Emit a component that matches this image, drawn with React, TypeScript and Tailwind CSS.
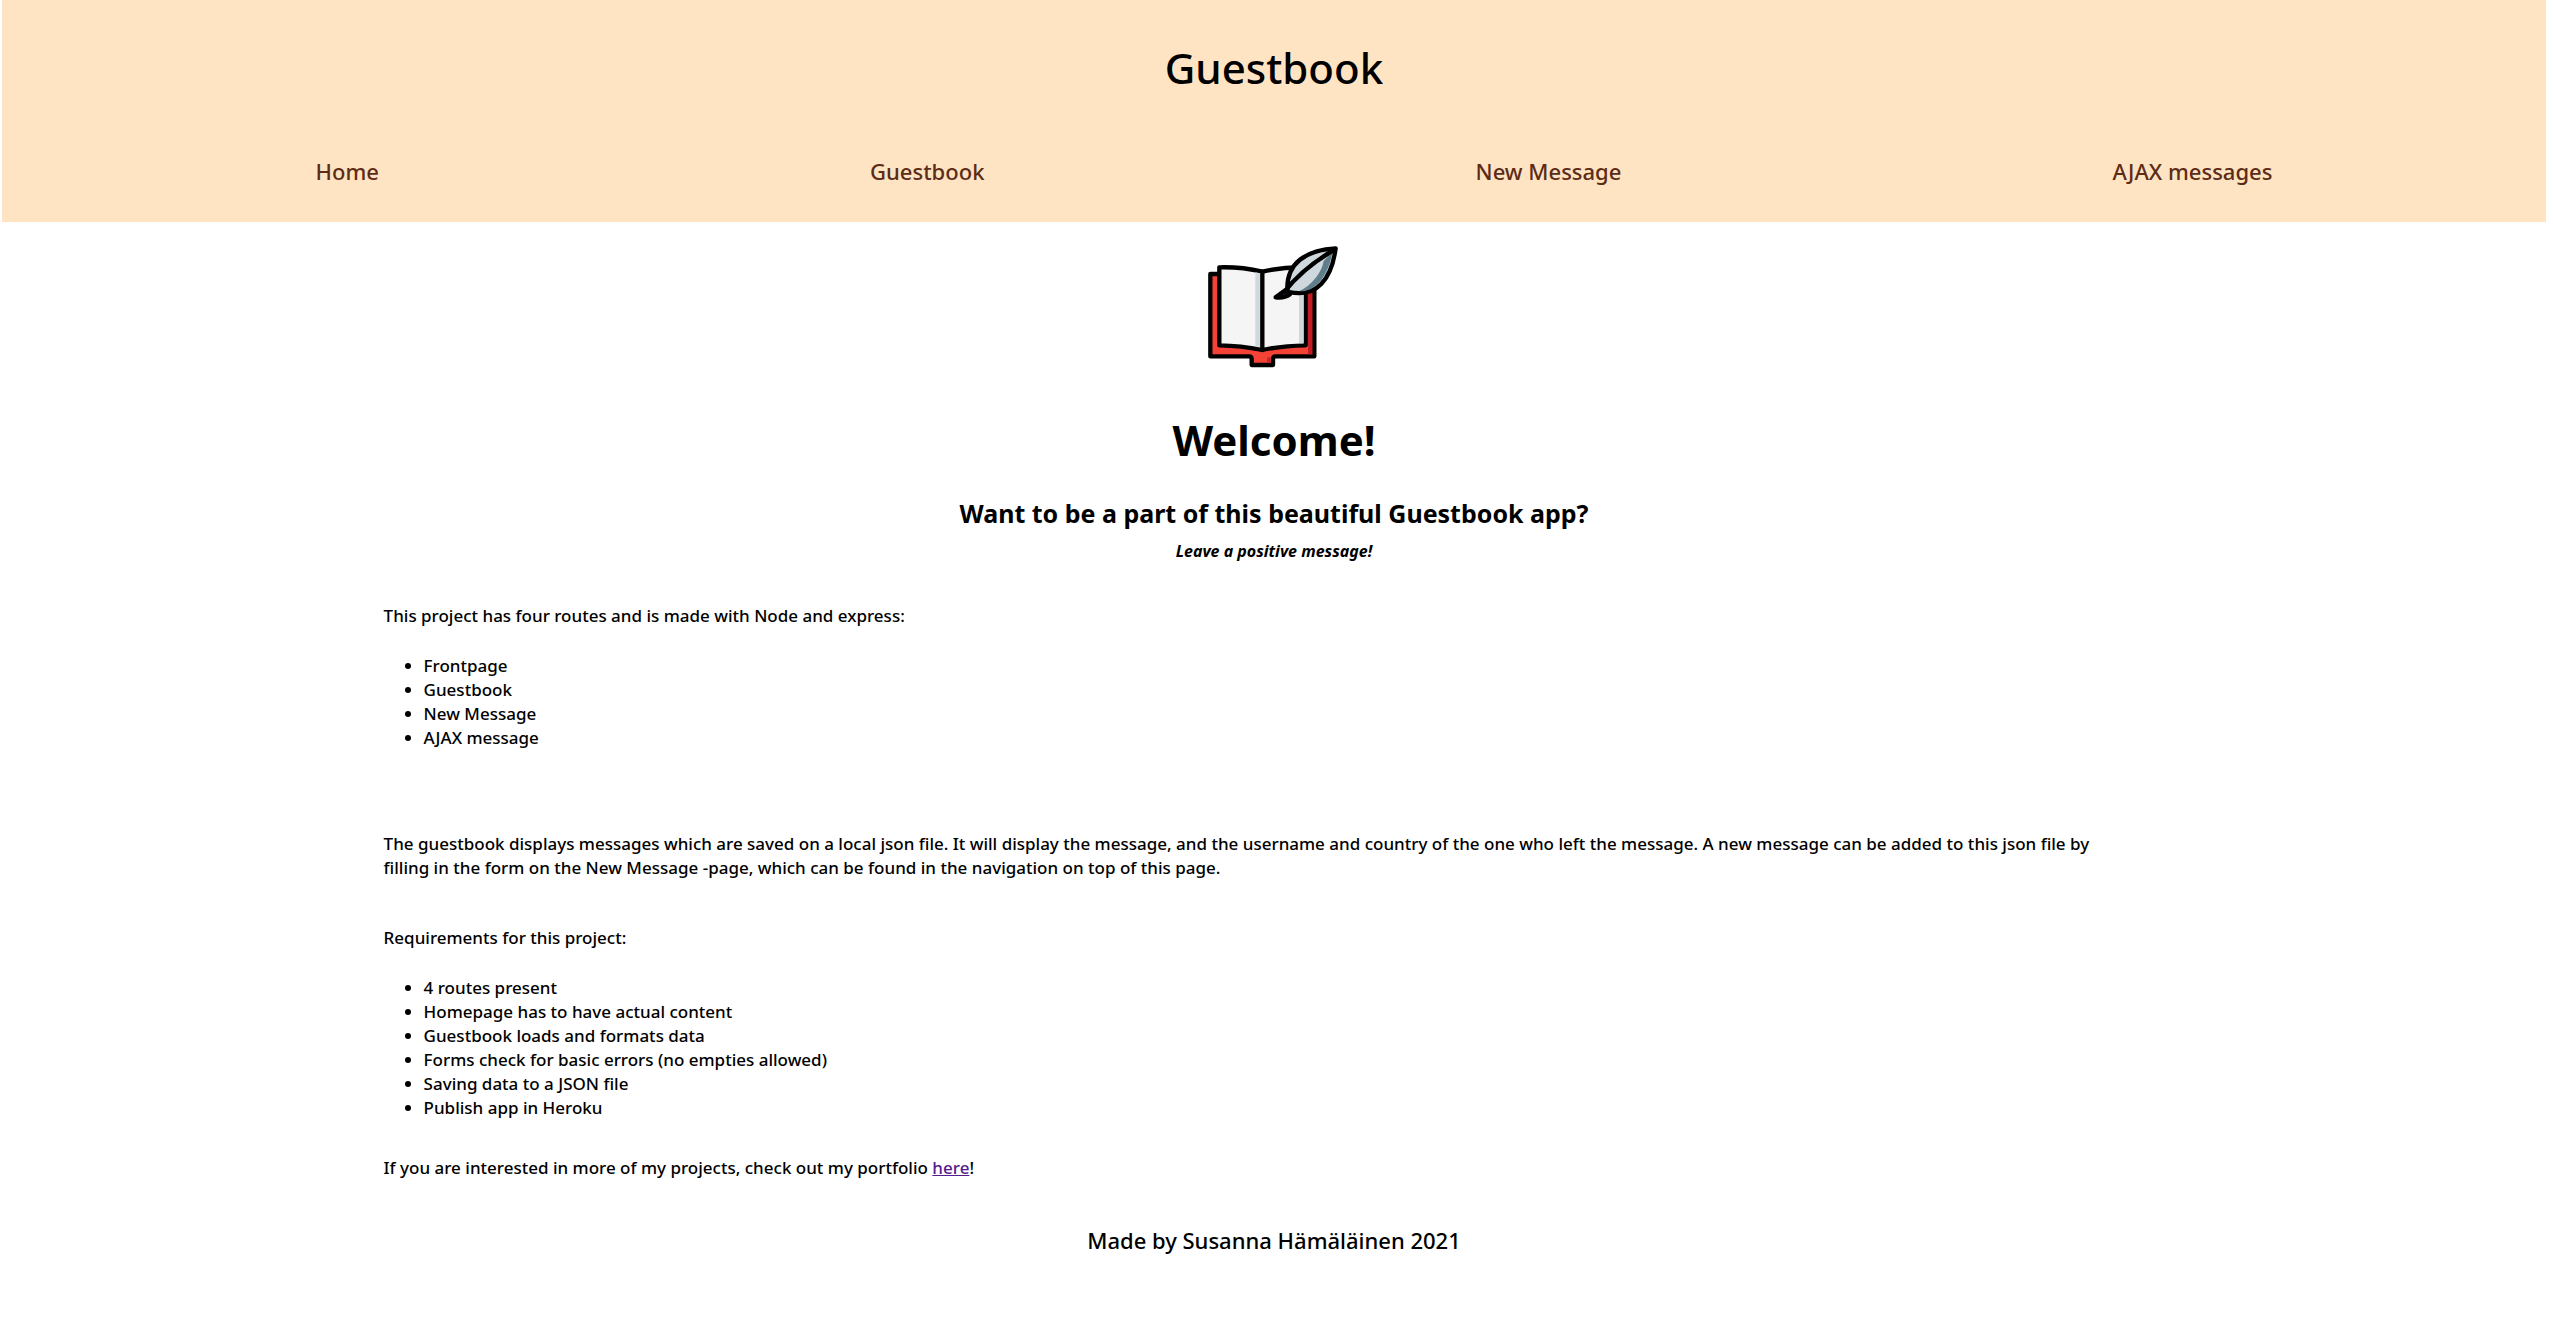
const navLinks = ["Home", "Guestbook", "New Message", "AJAX messages"];
const routes = ["Frontpage", "Guestbook", "New Message", "AJAX message"];
const requirements = [
  "4 routes present",
  "Homepage has to have actual content",
  "Guestbook loads and formats data",
  "Forms check for basic errors (no empties allowed)",
  "Saving data to a JSON file",
  "Publish app in Heroku",
];

function BookIcon() {
  return (
    <svg viewBox="0 0 510 450" className="h-[150px] w-[170px]" role="img" aria-label="Guestbook with quill">
      <g stroke="#000" strokeWidth="13" strokeLinejoin="round" strokeLinecap="round">
        <path d="M91 132H64V379H180Q188 379 188 387V405H252V387Q252 379 260 379H376V132H350Z" fill="#f44336" />
        <path d="M357 180H370V373H357Z" fill="#c21b24" stroke="none" />
        <path d="M234 382H246V399H234Z" fill="#c62828" stroke="none" />
        <path d="M91 112Q155 110 220 125Q285 110 350 112V346Q280 347 220 360Q155 347 91 346Z" fill="#f5f5f5" />
        <path d="M199 127L214 130V351L199 348ZM330 150H344V340H330Z" fill="#cfd8dc" stroke="none" />
        <path d="M220 125V360" fill="none" />
        <path d="M295 180C292 100 350 60 440 55C428 145 385 205 300 186Z" fill="#cfd8dc" />
        <path d="M431 66C416 136 385 185 330 184C370 165 400 125 404 93Z" fill="#607d8b" stroke="none" />
        <path d="M260 202L290 180L303 193Q285 206 260 202Z" fill="#26374f" />
        <path d="M286 186Q340 115 435 60" fill="none" />
      </g>
    </svg>
  );
}

function BulletList({ items }: { items: string[] }) {
  return (
    <ul className="mt-[26px] list-disc pl-10">
      {items.map((item) => (
        <li key={item}>{item}</li>
      ))}
    </ul>
  );
}

export default function App() {
  return (
    <div className="bg-white pr-[7px] pl-0.5 font-['Noto_Sans',sans-serif] text-[17px] leading-6 font-medium text-black">
      <header className="bg-[#ffe4c4] pt-[38px] pb-[34px]">
        <p className="text-center text-[42px] leading-[60px]">Guestbook</p>
        <nav className="mt-14">
          <ul className="flex justify-around pr-7 pl-[68px] text-[22px] leading-[34px] text-[#5c2c16]">
            {navLinks.map((label) => (
              <li key={label}>
                <a href="#">{label}</a>
              </li>
            ))}
          </ul>
        </nav>
      </header>
      <main>
        <div className="flex flex-col items-center pt-2 text-center font-bold">
          <BookIcon />
          <h1 className="mt-7 text-[42px] leading-[64px]">Welcome!</h1>
          <h2 className="mt-[21px] text-[25px] leading-10">Want to be a part of this beautiful Guestbook app?</h2>
          <p className="mt-1.5 text-base italic">Leave a positive message!</p>
        </div>
        <div className="mt-[41px] mr-[16.5%] ml-[15%]">
          <p>This project has four routes and is made with Node and express:</p>
          <BulletList items={routes} />
          <p className="mt-[82px]">
            The guestbook displays messages which are saved on a local json file. It will display the message, and the
            username and country of the one who left the message. A new message can be added to this json file by filling
            in the form on the New Message -page, which can be found in the navigation on top of this page.
          </p>
          <p className="mt-[46px]">Requirements for this project:</p>
          <BulletList items={requirements} />
          <p className="mt-9">
            If you are interested in more of my projects, check out my portfolio{" "}
            <a href="#" className="text-[#551a8b] underline">
              here
            </a>
            !
          </p>
        </div>
      </main>
      <footer className="pt-[43px] pb-14 text-center text-[22px] leading-[34px]">Made by Susanna Hämäläinen 2021</footer>
    </div>
  );
}
